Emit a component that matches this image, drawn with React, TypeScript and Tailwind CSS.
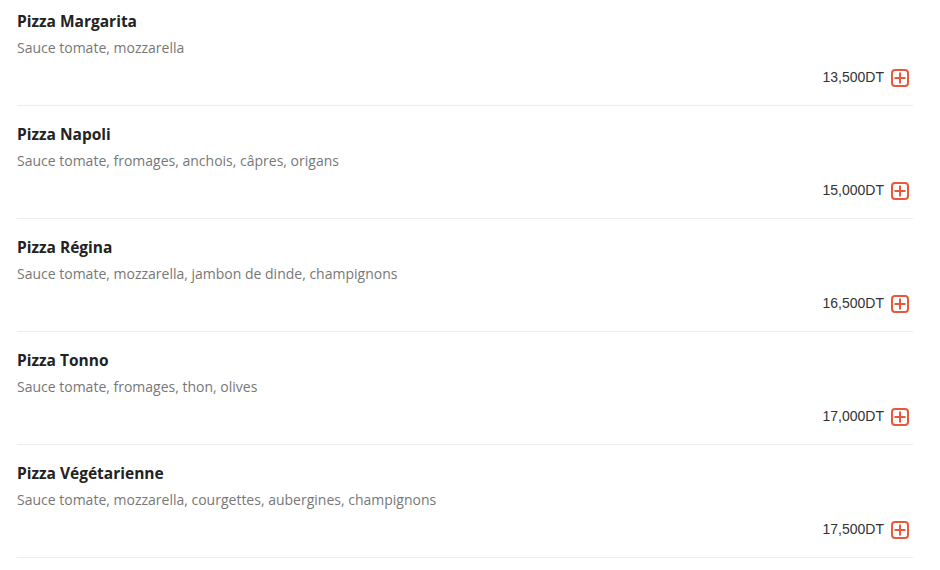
const pizzas = [
  { name: "Pizza Margarita", desc: "Sauce tomate, mozzarella", price: "13,500DT" },
  { name: "Pizza Napoli", desc: "Sauce tomate, fromages, anchois, câpres, origans", price: "15,000DT" },
  { name: "Pizza Régina", desc: "Sauce tomate, mozzarella, jambon de dinde, champignons", price: "16,500DT" },
  { name: "Pizza Tonno", desc: "Sauce tomate, fromages, thon, olives", price: "17,000DT" },
  { name: "Pizza Végétarienne", desc: "Sauce tomate, mozzarella, courgettes, aubergines, champignons", price: "17,500DT" },
];

const PlusBox = () => (
  <svg width="18" height="18" viewBox="0 0 18 18" fill="none">
    <rect x="1" y="1" width="16" height="16" rx="3" stroke="#e8583a" strokeWidth="2" />
    <path d="M9 3.5v11M3.5 9h11" stroke="#e8583a" strokeWidth="2" />
  </svg>
);

export default function App() {
  return (
    <div className="w-[940px] h-[570px] bg-white overflow-hidden pl-[17px] pr-[27px]">
      {pizzas.map((p) => (
        <div key={p.name} className="pt-[18px] first:pt-[11px] border-b border-[#ececec] pb-[17px]">
          <h3 className="font-['Open_Sans',sans-serif] font-bold text-[15.5px] leading-5 text-[#222]">{p.name}</h3>
          <p className="mt-[7px] font-['Open_Sans',sans-serif] text-[14px] leading-5 text-[#777]">{p.desc}</p>
          <div className="mt-[9px] flex items-center justify-end gap-[7px] pr-[4px]">
            <span className="font-['Liberation_Sans',sans-serif] text-[14px] text-[#333]">{p.price}</span>
            <PlusBox />
          </div>
        </div>
      ))}
    </div>
  );
}
